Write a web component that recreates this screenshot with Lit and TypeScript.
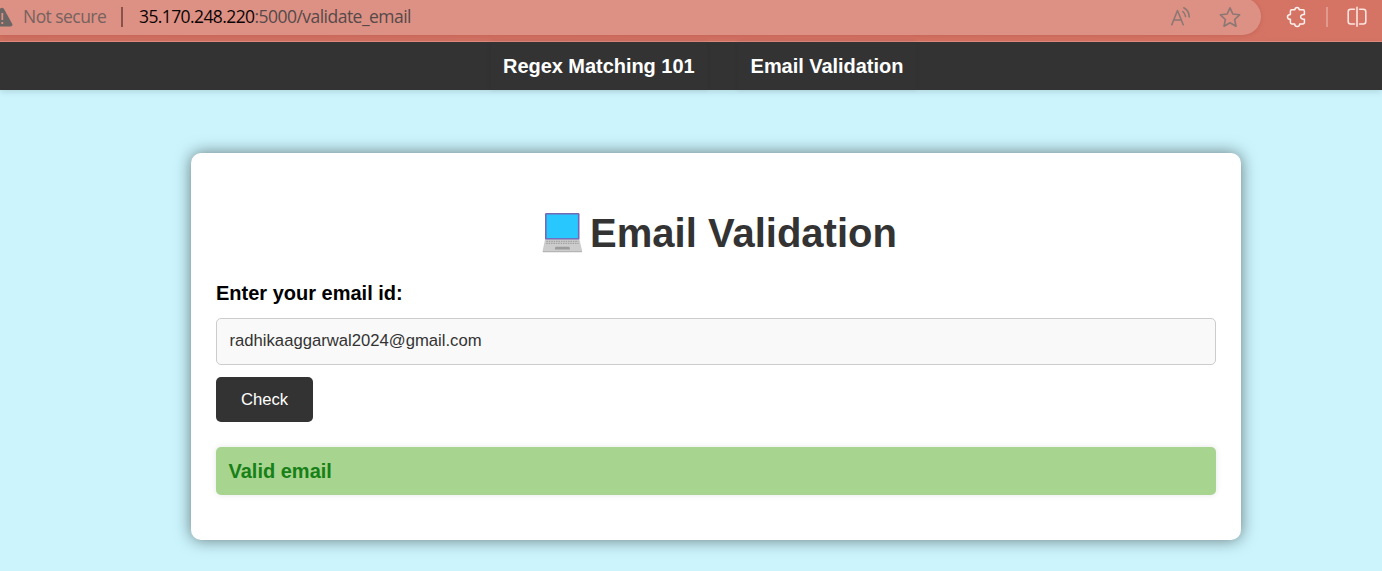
import { LitElement, html, css } from "lit";
import { customElement } from "lit/decorators.js";

@customElement("browser-bar")
class BrowserBar extends LitElement {
  static styles = css`
    :host { display: flex; box-sizing: border-box; height: 42px; overflow: hidden; background: linear-gradient(90deg, #d07162, #d57465); border-bottom: 1px solid #e28c7f; }
    .pill { box-sizing: border-box; display: flex; align-items: center; width: 1261px; height: 37px; margin-top: -2px; padding-top: 1px; background: #dd9184; border-radius: 0 18.5px 18.5px 0; box-shadow: 0 1px 4px rgba(150, 50, 35, 0.22); flex: none; font: 17.5px/24px "Open Sans", "Noto Sans", sans-serif; color: #55494a; white-space: pre; }
    .warn { width: 14px; height: 20px; flex: none; }
    .secure { width: 83px; margin-left: 9px; padding-bottom: 2px; color: #76625f; letter-spacing: -0.55px; }
    .rule { width: 2px; height: 20px; margin: 0 16px 0 15px; background: #88524b; }
    .url { flex: 1; padding-bottom: 2px; letter-spacing: -0.53px; }
    .host { color: #0c0505; letter-spacing: -0.6px; }
    .read { width: 22px; height: 22px; margin-right: 27px; }
    .star { width: 22px; height: 22px; margin-right: 20px; }
    .tools { display: flex; align-items: center; height: 34px; margin-left: 25px; }
    .tools svg { width: 22px; height: 22px; flex: none; }
    .split { width: 2px; height: 20px; margin: 0 18px; background: #e29a90; }
  `;

  render() {
    return html`
      <div class="pill">
        <svg class="warn" viewBox="0 0 14 20"><path d="M0 1.7Q2-.3 4 2l8.3 15q.8 2.3-2 2.5H0z" fill="#6b6563" /><path d="M2.3 6v7M2.3 15v2" stroke="#dd9184" stroke-width="1.8" /></svg>
        <span class="secure">Not secure</span>
        <span class="rule"></span>
        <span class="url"><span class="host">35.170.248.220</span>:5000/validate_email</span>
        <svg class="read" viewBox="0 0 22 22" fill="none" stroke="#8b7773" stroke-width="1.6" stroke-linecap="round" stroke-linejoin="round"><path d="M1.8 18.7 7.5 4.5l5.7 14.2M3.7 14h7.6M12.8 5.5q2.4 2 2.7 5M13.8 1.8q5.2 2.5 5.4 9.2" /></svg>
        <svg class="star" viewBox="0 0 22 22" fill="none" stroke="#8b7773" stroke-width="1.6" stroke-linejoin="round"><path d="m11 1.8 2.8 6.2 6.8.8-5 4.7 1.4 6.7-6-3.4-6 3.4 1.4-6.7-5-4.7 6.8-.8z" /></svg>
      </div>
      <div class="tools">
        <svg viewBox="0 0 22 22" fill="none" stroke="#fff1ee" stroke-width="1.5" stroke-linejoin="round"><path d="M5.8 3.8h3.1c.1-3 4.2-3 4.3 0H17c.9 0 1.4.5 1.4 1.4v3.4c-5-.8-5 5.4 0 4.6v3.4c0 .9-.5 1.4-1.4 1.4h-3.3c-.2 3.4-4.8 3.4-5 0H5.8c-.9 0-1.4-.5-1.4-1.4v-3.3c-3.9-.2-3.9-4.6 0-4.8V5.2c0-.9.5-1.4 1.4-1.4z" /></svg>
        <span class="split"></span>
        <svg viewBox="0 0 22 22" fill="none" stroke="#fbe3df" stroke-width="1.6" stroke-linecap="round"><path d="M8.5 3.3H4.7Q2.2 3.3 2.2 5.8v9.7q0 2.5 2.5 2.5h3.8M13.5 3.3h3.8q2.5 0 2.5 2.5v9.7q0 2.5-2.5 2.5h-3.8M11 1.3v19" /></svg>
      </div>
    `;
  }
}

@customElement("app-root")
class AppRoot extends LitElement {
  static styles = css`
    :host { display: block; height: 571px; overflow: hidden; background: #cbf4fc; font-family: "Liberation Sans", Arial, sans-serif; }
    .nav { box-sizing: border-box; display: flex; height: 48px; padding-left: 490.5px; gap: 31px; background: #333; box-shadow: 0 2px 6px rgba(0, 0, 0, 0.12); font-size: 20px; font-weight: bold; line-height: 48px; }
    .nav a { color: #fff; padding: 0 12.5px; text-decoration: none; white-space: nowrap; letter-spacing: -0.04px; box-shadow: 0 0 5px rgba(0, 0, 0, 0.08); }
    .card { box-sizing: border-box; width: 1050px; height: 387px; margin: 63px 0 0 191px; padding: 57px 25px 0; border-radius: 10px; background: #fff; box-shadow: 0 0 16px rgba(0, 0, 0, 0.5); }
    h1 { display: flex; justify-content: center; align-items: center; height: 46px; margin: 0; padding-left: 5px; font-size: 40px; line-height: 46px; color: #333; white-space: nowrap; }
    .laptop { width: 50px; height: 46px; flex: none; }
    label { display: block; margin-top: 25px; font-size: 20px; line-height: 24px; font-weight: bold; color: #000; }
    input { box-sizing: border-box; display: block; width: 100%; height: 47px; margin: 13px 0 12px; padding: 0 12.5px 2px; border: 1px solid #ccc; border-radius: 5px; background: #f9f9f9; color: #333; font: 16.67px "Liberation Sans", Arial, sans-serif; outline: none; }
    button { display: block; width: 97px; height: 45px; padding: 0; border: 0; border-radius: 5px; background: #333; color: #fff; font: 16.67px "Liberation Sans", Arial, sans-serif; }
    .result { margin-top: 25px; padding: 0 12.5px; height: 48px; line-height: 48px; border-radius: 5px; background: #a7d58f; color: #178017; font-size: 20px; font-weight: bold; box-shadow: 0 0 6px rgba(0, 0, 0, 0.1); }
  `;

  render() {
    return html`
      <browser-bar></browser-bar>
      <nav class="nav"><a>Regex Matching 101</a><a>Email Validation</a></nav>
      <main class="card">
        <h1>
          <svg class="laptop" viewBox="0 0 50 46">
            <rect x="5" y="3" width="34.5" height="27" rx="1.2" fill="#7469b5" />
            <rect x="6.6" y="4.5" width="31.3" height="23.6" fill="#28c8ff" />
            <path d="M5 29.5h34.5L42 40.6H2.7z" fill="#ccc" />
            <path d="M6.5 31.3h31.8M6.2 33.4h32.4" stroke="#a2a2a2" stroke-width="1.3" stroke-dasharray="1.5 .9" />
            <path d="M15.4 36.7h14l.7 2.9H14.8z" fill="#9c9c9c" />
            <path d="M2.7 40.6H42v1.6H2.7z" fill="#b5b5b5" />
          </svg>Email Validation
        </h1>
        <label>Enter your email id:</label>
        <input type="text" value="radhikaaggarwal2024@gmail.com" />
        <button>Check</button>
        <div class="result">Valid email</div>
      </main>
    `;
  }
}
